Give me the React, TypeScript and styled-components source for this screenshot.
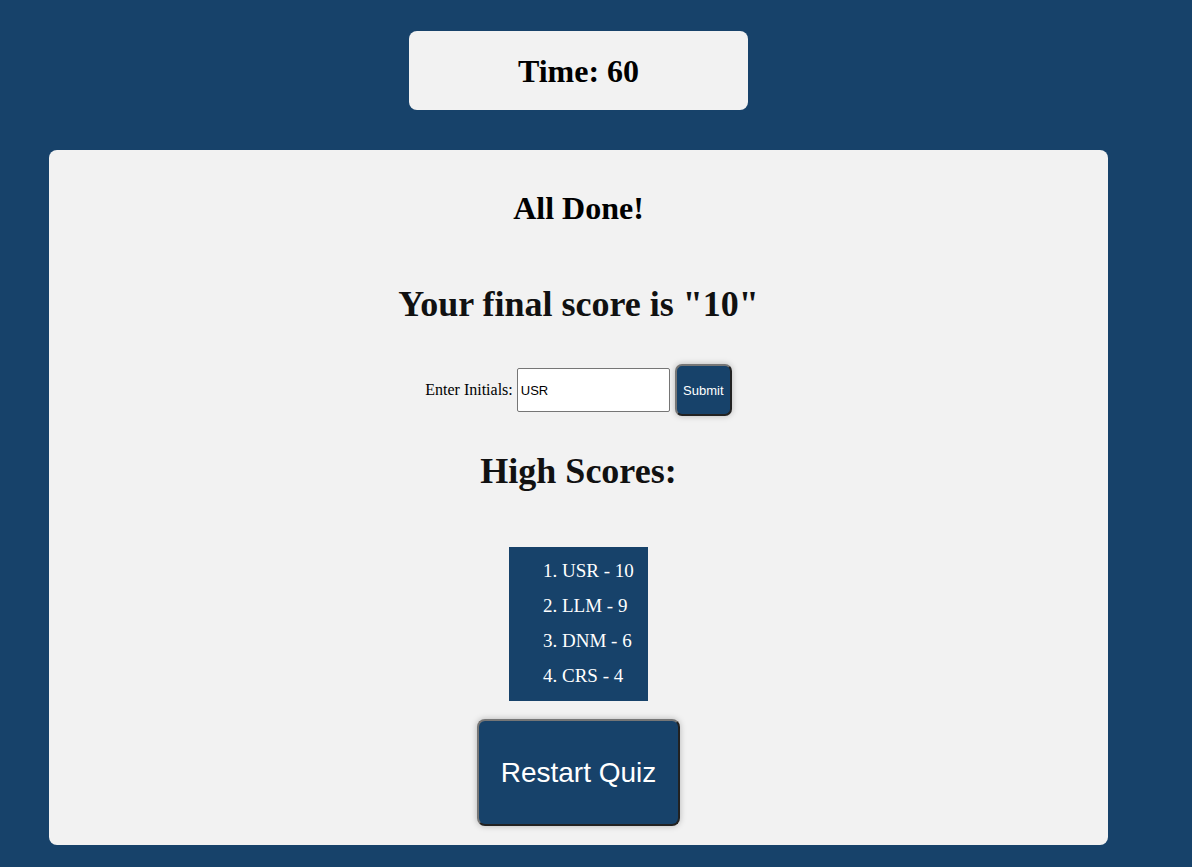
import React from "react";
import styled, { createGlobalStyle } from "styled-components";

const GlobalStyle = createGlobalStyle`
  html, body { margin: 0; padding: 0; }
  body {
    background: #17426a;
    font-family: "Liberation Serif", "Times New Roman", serif;
    min-height: 867px;
  }
`;

const Page = styled.div`
  width: 1157px;
  display: flex;
  flex-direction: column;
  align-items: center;
  padding-top: 31px;
`;

const TimerBox = styled.div`
  width: 339px;
  height: 79px;
  background: #f2f2f2;
  border-radius: 8px;
  display: flex;
  align-items: center;
  justify-content: center;
`;

const TimerText = styled.h1`
  margin: 2px 0 0;
  font-size: 32px;
  font-weight: bold;
  color: #000;
`;

const Card = styled.div`
  margin-top: 40px;
  width: 1059px;
  height: 695px;
  box-sizing: border-box;
  background: #f2f2f2;
  border-radius: 8px;
  display: flex;
  flex-direction: column;
  align-items: center;
`;

const DoneTitle = styled.h2`
  margin: 40px 0 0;
  font-size: 32px;
  font-weight: bold;
  color: #000;
`;

const ScoreTitle = styled.h2<{ $top: number }>`
  margin: ${(p) => p.$top}px 0 0;
  font-size: 36px;
  font-weight: bold;
  color: #111;
`;

const Form = styled.form`
  margin-top: 39px;
  display: flex;
  align-items: center;
  gap: 4px;
`;

const Label = styled.label`
  font-size: 16px;
  color: #000;
`;

const Input = styled.input`
  width: 153px;
  height: 44px;
  box-sizing: border-box;
  border: 1px solid #767676;
  border-radius: 2px;
  background: #fff;
  padding: 0 3px;
  font-family: "Liberation Sans", Arial, sans-serif;
  font-size: 13px;
  color: #000;
`;

const SubmitButton = styled.button`
  width: 57px;
  height: 52px;
  box-sizing: border-box;
  margin-left: 1px;
  background: #17426a;
  color: #fff;
  border: 2px solid;
  border-color: #767676 #222 #222 #767676;
  border-radius: 7px;
  box-shadow: 0 0 6px rgba(0, 0, 0, 0.25);
  font-family: "Liberation Sans", Arial, sans-serif;
  font-size: 13px;
  padding: 0;
`;

const ScoreList = styled.ol`
  margin: 55px 0 0;
  width: 139px;
  height: 154px;
  box-sizing: border-box;
  background: #17426a;
  color: #fff;
  padding: 6px 10px 8px 53px;
  list-style: decimal outside;
`;

const ScoreItem = styled.li`
  font-size: 19px;
  line-height: 35px;
`;

const RestartButton = styled.button`
  margin-top: 18px;
  width: 203px;
  height: 107px;
  box-sizing: border-box;
  background: #17426a;
  color: #fff;
  border: 2px solid;
  border-color: #767676 #222 #222 #767676;
  border-radius: 8px;
  box-shadow: 0 0 6px rgba(0, 0, 0, 0.25);
  font-family: "Liberation Sans", Arial, sans-serif;
  font-size: 28px;
  padding: 0;
`;

const scores = [
  { name: "USR", score: 10 },
  { name: "LLM", score: 9 },
  { name: "DNM", score: 6 },
  { name: "CRS", score: 4 },
];

export default function App() {
  return (
    <>
      <GlobalStyle />
      <Page>
        <TimerBox>
          <TimerText>Time: 60</TimerText>
        </TimerBox>
        <Card>
          <DoneTitle>All Done!</DoneTitle>
          <ScoreTitle $top={56}>Your final score is "10"</ScoreTitle>
          <Form onSubmit={(e) => e.preventDefault()}>
            <Label htmlFor="initials">Enter Initials:</Label>
            <Input id="initials" defaultValue="USR" />
            <SubmitButton type="submit">Submit</SubmitButton>
          </Form>
          <ScoreTitle $top={34}>High Scores:</ScoreTitle>
          <ScoreList>
            {scores.map((s) => (
              <ScoreItem key={s.name}>
                {s.name} - {s.score}
              </ScoreItem>
            ))}
          </ScoreList>
          <RestartButton type="button">Restart Quiz</RestartButton>
        </Card>
      </Page>
    </>
  );
}
